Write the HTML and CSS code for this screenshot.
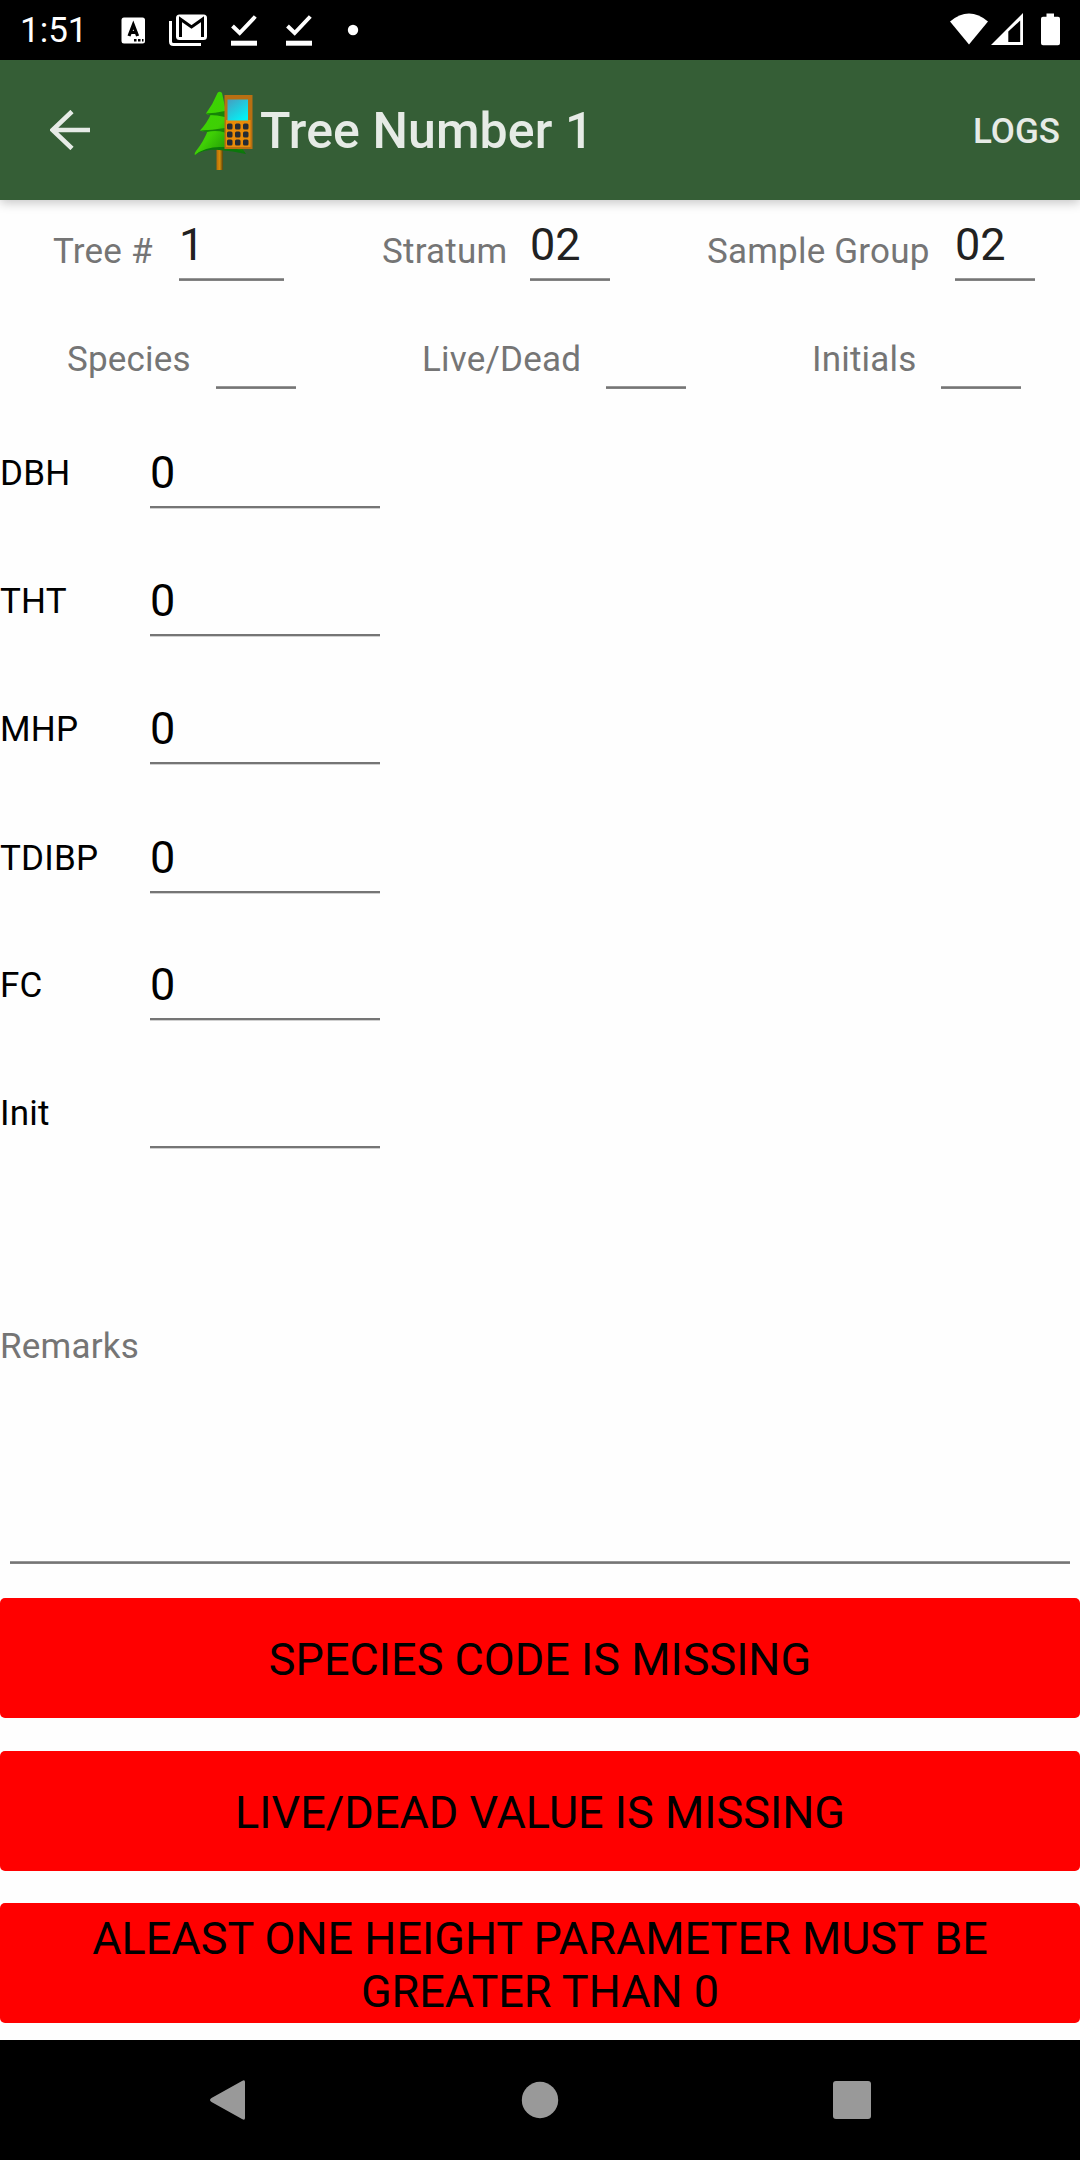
FILE: index.html
```html
<!DOCTYPE html>
<html lang="en">
<head>
<meta charset="utf-8">
<title>Tree Number 1</title>
<link rel="stylesheet" href="styles.css">
</head>
<body>
<div class="screen">
  <div class="status-bar">
    <span class="clock">1:51</span>
    <svg class="status-notifications" width="248" height="60" viewBox="112 0 248 60">
      <rect x="121.500" y="17.500" width="23.500" height="26" rx="2.500" fill="#fff"/>
      <path d="M129 36L133.300 25L137.600 36M130.500 32.500H136" fill="none" stroke="#000" stroke-width="3.200"/>
      <path d="M134 39h2.500v2.500h-2.500zM138 39h2.500v2.500h-2.500zM142 39h1.500v2.500h-1.500z" fill="#000"/>
      <path d="M170.500 21V41.500Q170.500 44.500 173.500 44.500H201" fill="none" stroke="#fff" stroke-width="3"/>
      <rect x="176" y="14.500" width="31" height="25.500" rx="3.500" fill="#fff"/>
      <path d="M180.500 37V19.200L191.500 27L202.500 19.200V37" fill="none" stroke="#000" stroke-width="3"/>
      <g fill="none" stroke="#fff">
        <path d="M232.500 26L239.700 33L255.300 16.500" stroke-width="4"/>
        <path d="M231 43.200H257" stroke-width="5"/>
        <path d="M287.500 26L294.700 33L310.300 16.500" stroke-width="4"/>
        <path d="M286 43.200H312" stroke-width="5"/>
      </g>
      <circle cx="353" cy="30" r="5.200" fill="#fff"/>
    </svg>
    <svg class="status-system" width="120" height="60" viewBox="945 0 120 60">
      <path d="M950 21.500Q969 5.500 988 21.500L969 44.500Z" fill="#fff"/>
      <path fill-rule="evenodd" d="M991 45L1023 13V45ZM1008.300 31.500V42H1020.200V20.500Z" fill="#fff"/>
      <path d="M1046.500 13.500h7.500v3.300h4q2 0 2 2v24.500q0 2-2 2h-15q-2 0-2-2V18.800q0-2 2-2h3.500z" fill="#fff"/>
    </svg>
  </div>

  <div class="app-bar">
    <svg class="back" width="40" height="40" viewBox="0 0 40 40">
      <path d="M22 1.500L2.500 20L22 38.500M2.500 20H40" fill="none" stroke="#e6ebe6" stroke-width="4.600"/>
    </svg>
    <svg class="logo" width="60" height="80" viewBox="194 91 60 80">
      <defs>
        <linearGradient id="leaf" x1="0" y1="0" x2="1" y2="1">
          <stop offset="0" stop-color="#38d800"/><stop offset=".5" stop-color="#3fcf05"/><stop offset="1" stop-color="#087008"/>
        </linearGradient>
        <linearGradient id="display" x1="0" y1="0" x2=".7" y2="1">
          <stop offset="0" stop-color="#479dc0"/><stop offset="1" stop-color="#02f2f6"/>
        </linearGradient>
        <linearGradient id="trunk">
          <stop offset="0" stop-color="#b66b08"/><stop offset=".5" stop-color="#d78c08"/><stop offset="1" stop-color="#55440e"/>
        </linearGradient>
      </defs>
      <rect x="216.500" y="149" width="6.500" height="21" fill="url(#trunk)"/>
      <path d="M217.500 93Q219.500 90.500 222 93L230 130L246 154Q234 148 219 149Q204 148 195 155Q194 154 196 151Q204 141 208 130Q203 132 200 130.500Q207 123 211 114Q208 115 206 113.500Q213 104 217.500 93Z" fill="url(#leaf)"/>
      <path d="M206 113.500Q215 113 225 111V117Q217 115 210 115ZM200 130.500Q212 130 225 128V132.500Q216 130 207 132Z" fill="#168407"/>
      <path d="M195 155Q205 147 220 147Q236 146 246 154Q233 151 219 150Q205 149 195 155Z" fill="#0b780b"/>
      <rect x="224.500" y="95" width="28" height="54" fill="#b86f12"/>
      <rect x="226" y="120" width="24.500" height="27" fill="#e88b08"/>
      <rect x="227.500" y="99.500" width="20.500" height="21" fill="url(#display)"/>
      <g fill="#242b35">
        <rect x="227" y="123.500" width="5.500" height="6" rx="1.500"/><rect x="235" y="123.500" width="5.500" height="6" rx="1.500"/><rect x="243" y="123.500" width="5.500" height="6" rx="1.500"/>
        <rect x="227" y="131.500" width="5.500" height="6" rx="1.500"/><rect x="235" y="131.500" width="5.500" height="6" rx="1.500"/><rect x="243" y="131.500" width="5.500" height="6" rx="1.500"/>
        <rect x="227" y="139.500" width="5.500" height="6" rx="1.500"/><rect x="235" y="139.500" width="5.500" height="6" rx="1.500"/><rect x="243" y="139.500" width="5.500" height="6" rx="1.500"/>
      </g>
    </svg>
    <span class="title">Tree Number 1</span>
    <span class="action">LOGS</span>
  </div>

  <div class="content">
    <div class="fields fields-top">
      <div class="field"><span class="hint w-tree">Tree #</span><span class="edit wide">1</span></div>
      <div class="field"><span class="hint w-stratum">Stratum</span><span class="edit">02</span></div>
      <div class="field"><span class="hint w-group">Sample Group</span><span class="edit">02</span></div>
    </div>
    <div class="fields fields-second">
      <div class="field"><span class="hint w-species">Species</span><span class="edit"></span></div>
      <div class="field"><span class="hint w-live">Live/Dead</span><span class="edit"></span></div>
      <div class="field"><span class="hint w-initials">Initials</span><span class="edit"></span></div>
    </div>

    <div class="measures">
      <div class="measure"><span class="name">DBH</span><span class="value">0</span></div>
      <div class="measure"><span class="name">THT</span><span class="value">0</span></div>
      <div class="measure"><span class="name">MHP</span><span class="value">0</span></div>
      <div class="measure tall"><span class="name">TDIBP</span><span class="value">0</span></div>
      <div class="measure"><span class="name">FC</span><span class="value">0</span></div>
      <div class="measure"><span class="name">Init</span><span class="value"></span></div>
    </div>

    <div class="remarks">Remarks</div>

    <div class="errors">
      <div class="error">SPECIES CODE IS MISSING</div>
      <div class="error">LIVE/DEAD VALUE IS MISSING</div>
      <div class="error">ALEAST ONE HEIGHT PARAMETER MUST BE GREATER THAN 0</div>
    </div>
  </div>

  <div class="nav-bar">
    <svg width="44" height="44" viewBox="0 0 44 44"><path d="M36 3Q39 1 39 4V40Q39 43 36 41L5.500 24Q2.500 22 5.500 20Z" fill="#999"/></svg>
    <svg width="44" height="44" viewBox="0 0 44 44"><circle cx="22" cy="22" r="18.200" fill="#999"/></svg>
    <svg width="44" height="44" viewBox="0 0 44 44"><rect x="3" y="3" width="38" height="38" rx="3" fill="#999"/></svg>
  </div>
</div>
</body>
</html>
```
FILE: styles.css
```css
* { box-sizing: border-box; }

body {
  margin: 0;
  background: #fefefe;
  font-family: Roboto, "Liberation Sans", sans-serif;
  font-size: 35px;
  line-height: 41px;
}

svg { display: block; flex: none; }

.screen {
  display: flex;
  flex-direction: column;
  width: 1080px;
  height: 2160px;
  overflow: hidden;
}

.status-bar {
  display: flex;
  align-items: center;
  height: 60px;
  background: #000;
  color: #fff;
}
.clock { width: 92px; margin-left: 20px; padding-top: 1px; }
.status-system { margin-left: auto; margin-right: 15px; }

.app-bar {
  display: flex;
  align-items: center;
  height: 140px;
  padding: 0 20px 0 50px;
  background: #355e36;
  color: #e6ebe6;
  box-shadow: 0 3px 10px rgba(0, 0, 0, .22);
}
.logo { margin: 2px 0 0 104px; }
.title {
  margin-left: 6px;
  padding-top: 3px;
  font-size: 50px;
  font-weight: 500;
  line-height: 59px;
  letter-spacing: .1px;
}
.action { margin-left: auto; padding-top: 2px; font-weight: 500; }

.content {
  display: flex;
  flex-direction: column;
  height: 1840px;
}

.fields { display: flex; flex: none; height: 63px; }
.fields-top { margin-top: 18px; padding-left: 53px; gap: 97px; }
.fields-second { margin-top: 45px; padding-left: 67px; gap: 126px; }
.field { display: flex; }
.hint {
  margin-top: 13px;
  color: #757575;
  letter-spacing: .2px;
  white-space: nowrap;
}
.w-tree { width: 126px; }
.w-stratum { width: 149px; padding-left: 1px; }
.w-group { width: 248px; }
.w-species { width: 149px; }
.w-live { width: 184px; }
.w-initials { width: 129px; }

.edit {
  width: 80px;
  height: 63px;
  font-size: 45px;
  line-height: 53px;
  color: #212121;
  background: linear-gradient(#979797 1px, #757575 1px 2px, #838383 2px) bottom / 100% 3px no-repeat;
}
.edit.wide { width: 105px; }

.measures { display: flex; flex-direction: column; gap: 63px; margin-top: 56px; color: #000; }
.measure { display: flex; height: 65px; padding-bottom: 1px; }
.measure.tall { padding: 1px 0 0; }
.name { width: 150px; margin-top: 8px; letter-spacing: .2px; }
.value {
  width: 230px;
  padding-top: 1px;
  font-size: 45px;
  line-height: 53px;
  background: linear-gradient(#757575 2px, #d0d0d0 2px) bottom / 100% 3px no-repeat;
}

.remarks {
  flex: none;
  height: 238px;
  margin-top: 176px;
  color: #757575;
  letter-spacing: .2px;
  background: linear-gradient(#979797 1px, #757575 1px 2px, #838383 2px) center bottom / 1060px 3px no-repeat;
}

.errors { display: flex; flex-direction: column; gap: 33px; margin-top: 34px; }
.error {
  display: flex;
  align-items: center;
  justify-content: center;
  height: 120px;
  padding: 3px 60px 0;
  border-radius: 5px;
  background: #f00;
  color: #000;
  font-size: 45px;
  line-height: 53px;
  text-align: center;
}
.error:last-child { margin-top: -1px; }

.nav-bar {
  display: flex;
  justify-content: space-between;
  align-items: center;
  height: 120px;
  padding: 0 206px 0 206px;
  background: #000;
}
```
